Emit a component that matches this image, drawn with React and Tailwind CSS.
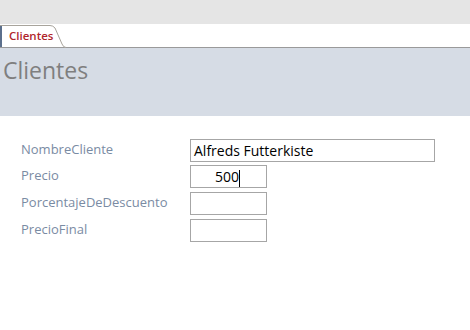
export default function App() {
  const font = { fontFamily: '"Open Sans", "Noto Sans", sans-serif' };
  const rows = [
    { label: 'NombreCliente', value: 'Alfreds Futterkiste', w: 'w-[245px]', align: 'text-left', mt: 'mt-0' },
    { label: 'Precio', value: '500', w: 'w-[77px]', align: 'text-right', mt: 'mt-[3px]', cursor: true },
    { label: 'PorcentajeDeDescuento', value: '', w: 'w-[77px]', align: 'text-right', mt: 'mt-[4px]' },
    { label: 'PrecioFinal', value: '', w: 'w-[77px]', align: 'text-right', mt: 'mt-[4px]' },
  ];
  return (
    <div className="w-[470px] h-[330px] bg-white overflow-hidden" style={font}>
      <div className="h-[24px] bg-[#e5e5e5]" />
      <div className="h-[24px] bg-white border-b border-[#9a9a9a] relative">
        <div className="relative w-[64px] h-[24px]">
          <svg className="absolute left-0 top-0" width="66" height="24" viewBox="0 0 66 24">
            <path d="M0 1.5 H50 Q53 1.5 55 4 L62 20 Q63.5 23.5 66 23.5" fill="white" stroke="#a8a49c" strokeWidth="1" />
            <rect x="0" y="2" width="2" height="21" fill="#5b6f8c" />
          </svg>
          <span className="absolute left-[9px] top-[4px] text-[11.5px] leading-[16px] font-semibold text-[#b0252b]">Clientes</span>
        </div>
      </div>
      <div className="h-[68px] bg-[#d6dce5] pl-[3px] pt-[7px]">
        <div className="text-[23px] leading-[30px] text-[#7f7f7f]">Clientes</div>
      </div>
      <div className="pt-[23px]">
        {rows.map((r) => (
          <div key={r.label} className={`flex items-center ${r.mt}`}>
            <div className="w-[190px] pl-[21px] text-[13px] leading-[18px] text-[#7a8ba3] -mt-[4px]">{r.label}</div>
            <div className={`${r.w} h-[23px] border border-[#a6a6a6] px-[3px] text-[14px] leading-[21px] text-black ${r.align}`}>
              {r.value}
              {r.cursor && <span className="inline-block w-[1px] h-[17px] bg-black align-middle mr-[23px]" />}
            </div>
          </div>
        ))}
      </div>
    </div>
  );
}
